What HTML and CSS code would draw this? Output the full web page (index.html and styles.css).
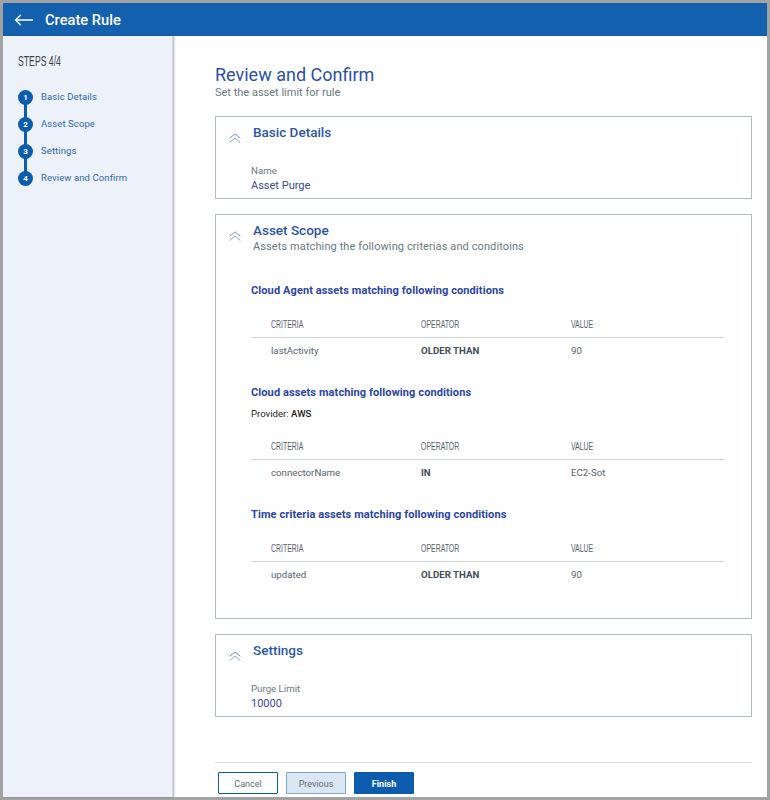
FILE: index.html
```html
<!DOCTYPE html>
<html lang="en">
<head>
  <meta charset="UTF-8">
  <title>Create Rule</title>
  <link rel="stylesheet" href="styles.css">
</head>
<body>
  <svg class="sprite" width="0" height="0">
    <symbol id="chevrons" viewBox="0 0 12 10">
      <path d="M.7 5.3 6 .8l5.300 4.500" fill="none" stroke="#6f84cf" stroke-width="1"/>
      <path d="M.7 9.500 6 5l5.300 4.500" fill="none" stroke="#8fa3c8" stroke-width="1"/>
    </symbol>
  </svg>
  <div class="app">
    <header class="topbar">
      <svg class="back" width="20" height="12" viewBox="0 0 20 12">
        <path d="M19 6H1.500M7 .8 1.500 6 7 11.200" fill="none" stroke="#fff" stroke-width="1.300"/>
      </svg>
      <span class="topbar-title">Create Rule</span>
    </header>
    <div class="main">
      <aside class="sidebar">
        <div class="steps-title"><span>STEPS 4/4</span></div>
        <ol class="steps">
          <li><span class="dot">1</span><span class="step-label">Basic Details</span></li>
          <li><span class="dot">2</span><span class="step-label">Asset Scope</span></li>
          <li><span class="dot">3</span><span class="step-label">Settings</span></li>
          <li><span class="dot">4</span><span class="step-label">Review and Confirm</span></li>
        </ol>
      </aside>
      <section class="content">
        <h1>Review and Confirm</h1>
        <p class="subtitle">Set the asset limit for rule</p>

        <div class="card">
          <div class="card-head">
            <svg class="chev"><use href="#chevrons"/></svg>
            <div><h2>Basic Details</h2></div>
          </div>
          <div class="field">
            <div class="field-label">Name</div>
            <div class="field-value">Asset Purge</div>
          </div>
        </div>

        <div class="card card-scope">
          <div class="card-head">
            <svg class="chev"><use href="#chevrons"/></svg>
            <div>
              <h2>Asset Scope</h2>
              <p class="card-sub">Assets matching the following criterias and conditoins</p>
            </div>
          </div>

          <div class="group group-first">
            <h3>Cloud Agent assets matching following conditions</h3>
            <table class="rules">
              <thead>
                <tr><th><span>CRITERIA</span></th><th><span>OPERATOR</span></th><th><span>VALUE</span></th></tr>
              </thead>
              <tbody>
                <tr><td>lastActivity</td><td class="op">OLDER THAN</td><td>90</td></tr>
              </tbody>
            </table>
          </div>

          <div class="group">
            <h3>Cloud assets matching following conditions</h3>
            <p class="provider">Provider: <b>AWS</b></p>
            <table class="rules">
              <thead>
                <tr><th><span>CRITERIA</span></th><th><span>OPERATOR</span></th><th><span>VALUE</span></th></tr>
              </thead>
              <tbody>
                <tr><td>connectorName</td><td class="op">IN</td><td>EC2-Sot</td></tr>
              </tbody>
            </table>
          </div>

          <div class="group">
            <h3>Time criteria assets matching following conditions</h3>
            <table class="rules">
              <thead>
                <tr><th><span>CRITERIA</span></th><th><span>OPERATOR</span></th><th><span>VALUE</span></th></tr>
              </thead>
              <tbody>
                <tr><td>updated</td><td class="op">OLDER THAN</td><td>90</td></tr>
              </tbody>
            </table>
          </div>
        </div>

        <div class="card">
          <div class="card-head">
            <svg class="chev"><use href="#chevrons"/></svg>
            <div><h2>Settings</h2></div>
          </div>
          <div class="field">
            <div class="field-label">Purge Limit</div>
            <div class="field-value">10000</div>
          </div>
        </div>

        <footer class="actions">
          <button class="btn btn-cancel">Cancel</button>
          <button class="btn btn-prev">Previous</button>
          <button class="btn btn-finish">Finish</button>
        </footer>
      </section>
    </div>
  </div>
</body>
</html>
```
FILE: styles.css
```css
html, body {
  margin: 0;
  height: 100%;
}

body {
  background-color: #a3a3a3;
  font-family: Roboto, "Liberation Sans", sans-serif;
  overflow: hidden;
}

.sprite {
  position: absolute;
}

.app {
  margin: 3px 3px 0;
  height: 794px;
  background-color: #fff;
  display: flex;
  flex-direction: column;
}

.topbar {
  height: 33px;
  flex: none;
  background-color: #1360ae;
  display: flex;
  align-items: center;
  padding-left: 11px;
}

.back {
  margin-right: 11px;
}

.topbar-title {
  color: #fff;
  font-size: 14.7px;
  font-weight: 500;
}

.main {
  flex: 1;
  display: flex;
  min-height: 0;
}

.sidebar {
  width: 170px;
  flex: none;
  background-color: #edf2fa;
  border-right: 1px solid #d5d9e0;
  box-shadow: 1px 0 2px rgba(60, 70, 90, 0.45);
  box-sizing: border-box;
  padding: 16px 0 0 15px;
}

.steps-title {
  font-size: 14px;
  color: #3a3f47;
  line-height: 18px;
  margin-bottom: 14px;
}

.steps-title span {
  display: inline-block;
  font-family: "Liberation Sans", sans-serif;
  transform: scaleX(0.62);
  transform-origin: left center;
  white-space: nowrap;
}

.steps {
  list-style: none;
  margin: 0;
  padding: 0;
}

.steps li {
  height: 27px;
  display: flex;
  align-items: center;
  font-size: 9.5px;
  letter-spacing: 0.1px;
  color: #2d68ac;
  position: relative;
}

.steps li:not(:last-child)::after {
  content: "";
  position: absolute;
  left: 6px;
  top: 14px;
  width: 3px;
  height: 27px;
  background-color: #0b5cad;
}

.step-label {
  margin-bottom: 2px;
}

.dot {
  width: 15px;
  height: 15px;
  border-radius: 50%;
  background-color: #0b5cad;
  color: #fff;
  font-size: 8px;
  font-weight: 700;
  display: flex;
  align-items: center;
  justify-content: center;
  margin-right: 8px;
  position: relative;
  z-index: 1;
}

.content {
  flex: 1;
  min-width: 0;
  padding: 29px 15px 0 42px;
  display: flex;
  flex-direction: column;
}

h1 {
  margin: 0;
  font-size: 18px;
  font-weight: 400;
  line-height: 20px;
  color: #2c4fa3;
}

.subtitle {
  margin: 1px 0 16px;
  font-size: 11px;
  line-height: 14px;
  color: #6b7780;
}

.card {
  border: 1px solid #aebbc5;
  margin-bottom: 15px;
  padding: 7px 0 0 12px;
  height: 83px;
  box-sizing: border-box;
}

.card-scope {
  height: auto;
  padding-bottom: 36px;
}

.card-head {
  display: flex;
}

.chev {
  width: 12px;
  height: 10px;
  margin: 9px 12px 0 1px;
  flex: none;
}

h2 {
  margin: 0;
  font-size: 13.5px;
  font-weight: 500;
  line-height: 17px;
  color: #2b57a6;
}

.card-sub {
  margin: 1px 0 0;
  font-size: 11px;
  letter-spacing: 0.1px;
  line-height: 14px;
  color: #6b7780;
}

.field {
  margin: 21px 0 0 23px;
}

.field-label {
  font-size: 9.7px;
  line-height: 13px;
  margin-bottom: 1px;
  color: #6b7780;
}

.field-value {
  font-size: 11px;
  line-height: 15px;
  color: #3a4a8c;
}

.group {
  margin-left: 23px;
  margin-right: 27px;
  padding-top: 28px;
}

.group-first {
  padding-top: 30px;
}

h3 {
  margin: 0;
  font-size: 11px;
  font-weight: 700;
  letter-spacing: 0.1px;
  line-height: 14px;
  color: #2a45a5;
}

.provider {
  margin: 7px 0 0;
  font-size: 9.6px;
  line-height: 13px;
  color: #222;
}

.provider b {
  font-weight: 500;
}

.rules {
  width: 100%;
  table-layout: fixed;
  border-collapse: collapse;
  margin-top: 19px;
}

.rules th {
  box-sizing: border-box;
  font-size: 11px;
  font-weight: 400;
  color: #56626b;
  text-align: left;
  padding: 0 0 5px 20px;
  line-height: 14px;
  border-bottom: 1px solid #cfd3d9;
  width: 150px;
}

.rules th span {
  display: inline-block;
  font-family: "Liberation Sans", sans-serif;
  transform: scaleX(0.63);
  transform-origin: left center;
}

.rules th:last-child {
  width: auto;
}

.rules td {
  font-size: 9.7px;
  color: #59626b;
  padding: 6px 0 0 20px;
  line-height: 14px;
}

.rules td.op {
  font-weight: 700;
  color: #444b53;
}

.actions {
  margin-top: auto;
  margin-bottom: 3px;
  border-top: 1px solid #dde4e9;
  padding: 9px 0 0 3px;
  display: flex;
  gap: 8px;
}

.btn {
  width: 60px;
  height: 22px;
  padding: 2px 0 0;
  border-radius: 1px;
  font-family: Roboto, "Liberation Sans", sans-serif;
  font-size: 9px;
  cursor: pointer;
}

.btn-cancel {
  background-color: #fff;
  border: 1px solid #0b5cad;
  color: #5d6b78;
}

.btn-prev {
  background-color: #dbe6f3;
  border: 1px solid #7ea6d0;
  color: #5d6b78;
}

.btn-finish {
  background-color: #0b5cad;
  border: 1px solid #0b5cad;
  color: #fff;
  font-weight: 700;
}
```
